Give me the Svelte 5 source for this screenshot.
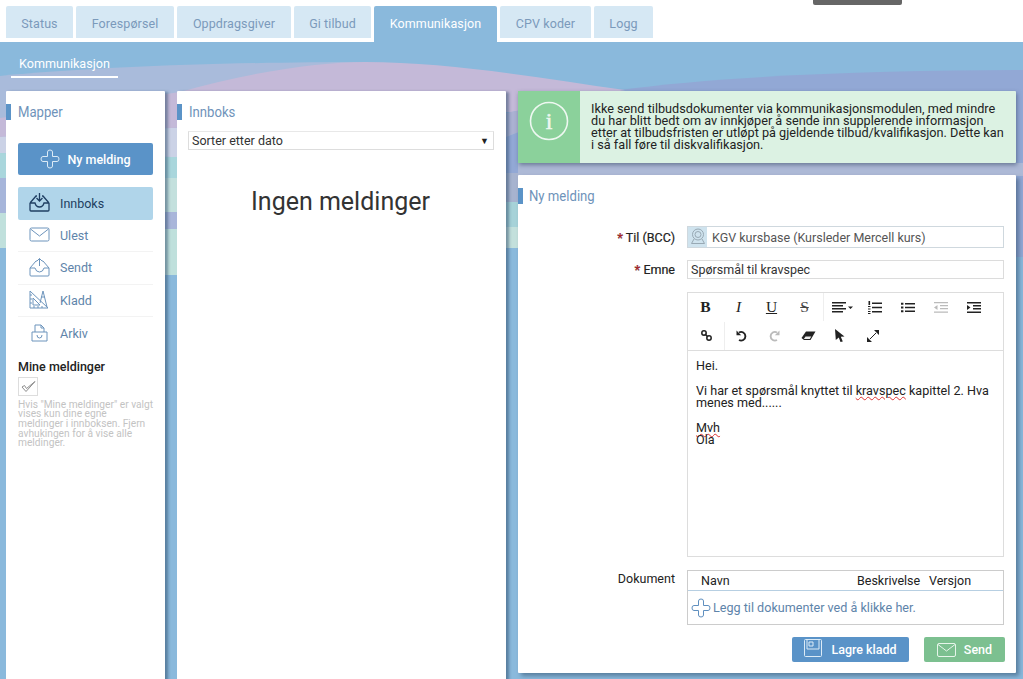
<script>
  const tabs = [
    { label: 'Status', w: 67 },
    { label: 'Forespørsel', w: 98 },
    { label: 'Oppdragsgiver', w: 114 },
    { label: 'Gi tilbud', w: 77 },
    { label: 'Kommunikasjon', w: 123, active: true },
    { label: 'CPV koder', w: 91 },
    { label: 'Logg', w: 59 }
  ];
  const folders = [
    { label: 'Innboks', icon: 'in', active: true },
    { label: 'Ulest', icon: 'mail' },
    { label: 'Sendt', icon: 'out' },
    { label: 'Kladd', icon: 'draft' },
    { label: 'Arkiv', icon: 'arch' }
  ];
  const plus = 'M7.5 7.5 V3 Q7.5 1 10 1 Q12.5 1 12.5 3 V7.5 H17 Q19 7.500 19 10 Q19 12.5 17 12.5 H12.5 V17 Q12.5 19 10 19 Q7.5 19 7.5 17 V12.5 H3 Q1 12.5 1 10 Q1 7.5 3 7.5 Z';
  const tray = 'M1 10 L7 3 H8 M13 3 H14 L20 10 M1 10 V17 Q1 18 2 18 H19 Q20 18 20 17 V10 M1 10 H6 Q7 14 10.5 14 Q14 14 15 10 H20';
</script>

<div class="page">
  <svg class="bg" viewBox="0 0 1023 679" preserveAspectRatio="none" aria-hidden="true">
    <rect width="1023" height="679" fill="#8ab9dc" />
    <path d="M0 76 C100 66 250 62 365 62 L400 160 L0 160 Z" fill="#a9bbdb" />
    <path d="M620 90 C720 76 880 70 1023 70 L1023 257 L506 257 L506 137 Z" fill="#92a8d5" />
    <path d="M0 118 L180 92 C250 72 320 62 365 62 C450 62 540 78 625 90 L512 112 L171 128 L0 137 Z" fill="#c4b9d8" />
    <path d="M506 113 L625 90 L506 137 Z" fill="#abb1d2" />
    <path d="M0 137 L171 128 L340 128 L340 157 L171 157 L0 153 Z" fill="#cbd2e6" />
    <path d="M0 153 L171 157 L340 157 L340 178 L0 178 Z" fill="#a9d6dc" />
    <path d="M0 178 H6 V213 H0 Z" fill="#a6b5da" />
    <rect x="0" y="213" width="6" height="35" fill="#c0e0dc" />
    <rect x="160" y="178" width="20" height="34" fill="#c3e0dd" />
    <rect x="160" y="212" width="20" height="17" fill="#a9b6da" />
    <rect x="160" y="229" width="20" height="46" fill="#bfe0dc" />
    <rect x="506" y="173" width="12" height="29" fill="#a7b3cf" />
    <rect x="506" y="202" width="12" height="25" fill="#a6d2d8" />
    <rect x="506" y="227" width="12" height="21" fill="#c3e0dc" />
    <rect x="506" y="248" width="12" height="12" fill="#8ab9dc" />
    <rect x="518" y="163" width="505" height="13" fill="#adb9d6" />
    <rect x="0" y="0" width="1023" height="42" fill="#fff" />
  </svg>

  <header class="tabs">
    {#each tabs as t}
      <div class="tab" class:active={t.active} style="width:{t.w}px">{t.label}</div>
    {/each}
    <div class="topchip"></div>
  </header>

  <nav class="subnav"><span>Kommunikasjon</span></nav>

  <main class="cols">
    <section class="card left">
      <h2><span>Mapper</span></h2>
      <button class="btn primary new">
        <svg width="20" height="20" viewBox="0 0 20 20" fill="none" stroke="#dcebf6" stroke-width="1"><path d={plus} /></svg>
        Ny melding
      </button>
      <ul class="folders">
        {#each folders as f}
          <li class:active={f.active}>
            <svg class="ficon" width="21" height="20" viewBox="0 0 21 20" fill="none" stroke={f.active ? '#1f3f63' : '#6d94bc'} stroke-width={f.active ? 1.3 : 1}>
              {#if f.icon === 'in'}
                <path d={tray} /><path d="M10.5 0 V8 M7.5 5 L10.5 8 L13.5 5" />
              {:else if f.icon === 'mail'}
                <rect x="1" y="3" width="19" height="13" rx="1.5" /><path d="M1.5 4 L10.5 11 L19.5 4" />
              {:else if f.icon === 'out'}
                <path d={tray} /><path d="M10.5 8 V0.5 M8 3 L10.5 .5 L13 3" />
              {:else if f.icon === 'draft'}
                <path d="M1 1 L19 18 H1 Z M4 8 L11 15 H4 Z M1 5 H3 M1 9 H3 M1 13 H3 M5 18 V16 M9 18 V16 M13 18 V16 M14 1 L11 13 M14 1 L18 17 M12 7 H16" />
              {:else}
                <path d="M6 9 V2 H12 L15 5 V9 M12 2 V5 H15 M3 9 H18 V18 H3 Z M8 12 Q8 15 10.500 15 Q13 15 13 12" />
              {/if}
            </svg>
            <span>{f.label}</span>
          </li>
        {/each}
      </ul>
      <h3>Mine meldinger</h3>
      <div class="check">
        <svg width="15" height="13" viewBox="0 0 15 13" fill="none" stroke="#8d8d8d" stroke-width="1"><path d="M1 7 L5 11.5 L14 1.5 L5.5 8.5 L3.5 5.5 Z" stroke-linejoin="round"/></svg>
      </div>
      <p class="hint">Hvis "Mine meldinger" er valgt<br />vises kun dine egne<br />meldinger i innboksen. Fjern<br />avhukingen for å vise alle<br />meldinger.</p>
    </section>

    <section class="card mid">
      <h2><span>Innboks</span></h2>
      <div class="sort"><span>Sorter etter dato</span><i>▼</i></div>
      <div class="empty">Ingen meldinger</div>
    </section>

    <div class="right">
      <aside class="alert">
        <div class="alert-ic">
          <svg width="40" height="40" viewBox="0 0 40 40" fill="none" stroke="#eef8f1" stroke-width="1.6">
            <circle cx="20" cy="20" r="18.500" />
            <text x="20" y="28" text-anchor="middle" font-family="Liberation Serif, serif" font-size="24" fill="#eef8f1" stroke="#eef8f1" stroke-width=".5">i</text>
          </svg>
        </div>
        <p>Ikke send tilbudsdokumenter via kommunikasjonsmodulen, med mindre du har blitt bedt om av innkjøper å sende inn supplerende informasjon etter at tilbudsfristen er utløpt på gjeldende tilbud/kvalifikasjon. Dette kan i så fall føre til diskvalifikasjon.</p>
      </aside>

      <section class="card form">
        <h2><span>Ny melding</span></h2>
        <div class="row first">
          <div class="lbl"><b>*</b> Til (BCC)</div>
          <div class="input to">
            <span class="avatar">
              <svg width="16" height="18" viewBox="0 0 16 18" fill="none" stroke="#98a9b4" stroke-width="1"><circle cx="8" cy="6.5" r="5.5"/><circle cx="8" cy="6.5" r="3"/><path d="M4 11 L1.5 15.5 H14.5 L12 11"/></svg>
            </span>
            <span>KGV kursbase (Kursleder Mercell kurs)</span>
          </div>
        </div>
        <div class="row second">
          <div class="lbl"><b>*</b> Emne</div>
          <div class="input subject">Spørsmål til kravspec</div>
        </div>
        <div class="row editor-row">
          <div class="lbl"></div>
          <div class="editor">
            <div class="toolbar">
              <div class="tool-line">
                <span class="tb serif"><strong>B</strong></span>
                <span class="tb serif"><em>I</em></span>
                <span class="tb serif u">U</span>
                <span class="tb serif s">S</span>
                <span class="sep push"></span>
                <span class="tb wide">
                  <svg width="22" height="11" viewBox="0 0 22 11" fill="#222"><path d="M0 0h14v1.4H0zM0 3h11v1.4H0zM0 6h14v1.4H0zM0 9h11v1.4H0zM16 4.500h5l-2.500 2.500z"/></svg>
                </span>
                <span class="tb">
                  <svg width="14" height="13" viewBox="0 0 14 13" fill="#222"><path d="M4 1.500h10V3H4zM4 5.700h10v1.500H4zM4 10h10v1.500H4zM.5 0h1.600v4H.5zM0 5h2.500v1H0zM0 7.500h2.500v1H0zM0 10h2.500v1H0zM0 12h2.500v1H0z"/></svg>
                </span>
                <span class="tb">
                  <svg width="14" height="11" viewBox="0 0 14 11" fill="#222"><path d="M4 1h10v1.500H4zM4 4.700h10v1.500H4zM4 8.500h10V10H4zM0 .8h2.400v2H0zM0 4.500h2.400v2H0zM0 8.200h2.400v2H0z"/></svg>
                </span>
                <span class="tb">
                  <svg width="14" height="11" viewBox="0 0 14 11" fill="#bbb"><path d="M0 0h14v1.200H0zM6 3h8v1.200H6zM6 6h8v1.200H6zM0 9.500h14v1.200H0zM3.500 3v5L0 5.500z"/></svg>
                </span>
                <span class="tb">
                  <svg width="14" height="11" viewBox="0 0 14 11" fill="#222"><path d="M0 0h14v1.400H0zM6 3h8v1.400H6zM6 6h8v1.400H6zM0 9.500h14v1.400H0zM0 3v5l3.500-2.500z"/></svg>
                </span>
              </div>
              <div class="tool-line second-line">
                <span class="tb link">
                  <svg width="11" height="11" viewBox="0 0 11 11" fill="none" stroke="#222" stroke-width="1.500"><circle cx="3" cy="3" r="2.200"/><circle cx="8" cy="8" r="2.200"/><path d="M4 4 L7 7"/></svg>
                </span>
                <span class="sep"></span>
                <span class="tb">
                  <svg width="12" height="12" viewBox="0 0 12 12" fill="none" stroke="#222" stroke-width="1.900"><path d="M3 2.500 A4.300 4.300 0 1 1 3 10"/><path d="M.5 .5 L.5 5.200 L5.200 5.200 Z" fill="#222" stroke="none"/></svg>
                </span>
                <span class="tb redo">
                  <svg width="12" height="12" viewBox="0 0 12 12" fill="none" stroke="#bbb" stroke-width="1.900"><path d="M9 2.500 A4.300 4.300 0 1 0 9 10"/><path d="M11.500 .5 L11.500 5.200 L6.800 5.200 Z" fill="#bbb" stroke="none"/></svg>
                </span>
                <span class="tb eraser">
                  <svg width="15" height="10" viewBox="0 0 15 10" fill="#222"><path d="M5 0.500 L14.500 0.500 L9.500 9 L3 9 L0.500 7 Z"/><path d="M4.500 5.500 L2.800 8 L8.800 8 L10.300 5.500 Z" fill="#eee"/></svg>
                </span>
                <span class="tb">
                  <svg width="10" height="13" viewBox="0 0 10 13" fill="#222"><path d="M0 0 L9.500 7.500 L5.800 7.800 L7.800 12.500 L5.500 13 L3.800 8.600 L0.800 11 Z"/></svg>
                </span>
                <span class="tb">
                  <svg width="12" height="12" viewBox="0 0 12 12" fill="#222"><path d="M7 0H12V5Z M0 7V12H5Z"/><path d="M3 9 L9 3" stroke="#222" stroke-width="1" /></svg>
                </span>
              </div>
            </div>
            <div class="body">
              <p>Hei.</p>
              <p>Vi har et spørsmål knyttet til <span class="spell">kravspec</span> kapittel 2. Hva menes med......</p>
              <p><span class="spell">Mvh</span><br />Ola</p>
            </div>
          </div>
        </div>
        <div class="row doc-row">
          <div class="lbl plain">Dokument</div>
          <div class="docs">
            <div class="doc-head"><span class="n">Navn</span><span class="d">Beskrivelse</span><span class="v">Versjon</span></div>
            <div class="doc-add">
              <svg width="20" height="20" viewBox="0 0 20 20" fill="none" stroke="#5f8fbf" stroke-width="1"><path d={plus} /></svg>
              <span>Legg til dokumenter ved å klikke her.</span>
            </div>
          </div>
        </div>
        <div class="actions">
          <button class="btn primary save">
            <svg class="save-ic" width="18" height="18" viewBox="0 0 18 18" fill="none" stroke="#dcebf6" stroke-width="1"><rect x=".5" y=".5" width="17" height="17" rx="1"/><path d="M3 .5 V10 H15 V.5 M5 3 H9 V7 H5 Z"/></svg>
            Lagre kladd
          </button>
          <button class="btn send">
            <svg width="19" height="14" viewBox="0 0 19 14" fill="none" stroke="#e6f5ea" stroke-width="1"><rect x=".5" y=".5" width="18" height="13" rx="1.500"/><path d="M1 1.500 L9.500 8 L18 1.500"/></svg>
            Send
          </button>
        </div>
      </section>
    </div>
  </main>
</div>

<style>
  :global(body) { margin: 0; background: #fff; }
  .page {
    position: relative;
    width: 1023px;
    height: 679px;
    overflow: hidden;
    font-family: Roboto, "Liberation Sans", sans-serif;
    font-size: 12.6px;
    color: #222;
  }
  .bg { position: absolute; left: 0; top: 0; width: 1023px; height: 679px; }
  .tabs {
    position: relative;
    height: 42px;
    box-sizing: border-box;
    padding: 6px 0 0 6px;
    display: flex;
    gap: 3px;
    align-items: flex-start;
  }
  .tab {
    height: 32px;
    line-height: 35px;
    text-align: center;
    background: #d6e8f4;
    color: #7b9abb;
    border-radius: 2px 2px 0 0;
    font-size: 12.5px;
    letter-spacing: .1px;
  }
  .tab.active { height: 36px; background: #8ab9dc; color: #fff; }
  .topchip {
    position: absolute;
    left: 813px; top: 0;
    width: 89px; height: 5px;
    background: #666;
    border-radius: 0 0 2px 2px;
  }
  .subnav {
    position: relative;
    height: 49px;
    box-sizing: border-box;
    padding: 14px 0 0 11px;
    color: #fff;
    font-size: 12.6px;
  }
  .subnav span {
    display: inline-block;
    width: 107px;
    padding-left: 8px;
    box-sizing: border-box;
    height: 21px;
    line-height: 14px;
    border-bottom: 2px solid #fff;
  }
  .cols {
    position: relative;
    display: flex;
    gap: 12px;
    padding-left: 6px;
    align-items: flex-start;
  }
  .card {
    background: #fff;
    box-shadow: 3px 1px 3px rgba(40, 70, 100, .5);
    border-radius: 1px;
  }
  .left, .mid { height: 600px; box-sizing: border-box; }
  .left { width: 159px; padding: 0 12px; position: relative; }
  .mid { width: 329px; padding: 0 12px; position: relative; }
  h2 {
    margin: 0;
    height: 40px;
    line-height: 43px;
    font-weight: 400;
    font-size: 15px;
    color: #6f93ba;
    position: relative;
  }
  h2 span { display: inline-block; transform: scaleX(.875); transform-origin: left center; }
  h2::before {
    content: '';
    position: absolute;
    left: -12px; top: 13px;
    width: 5px; height: 16px;
    background: #5b93c7;
  }
  .btn {
    border: 0;
    border-radius: 2px;
    color: #fff;
    font-family: Roboto, sans-serif;
    font-weight: 500;
    font-size: 12.5px;
    display: flex;
    align-items: center;
    justify-content: center;
  }
  .primary { background: #5a93c8; }
  .new {
    width: 135px;
    height: 32px;
    margin-top: 12px;
    gap: 7px;
    padding: 0;
  }
  .folders { list-style: none; margin: 12px 0 0; padding: 0; }
  .folders li {
    height: 32.5px;
    display: flex;
    align-items: center;
    gap: 10px;
    padding-left: 11px;
    color: #5e84aa;
    font-size: 12.5px;
    box-sizing: border-box;
    border-bottom: 1px solid #f3f3f3;
  }
  .folders li:last-child { border-bottom: 0; }
  .folders li.active {
    background: #b0d5ea;
    border-radius: 2px;
    color: #21405f;
    border-bottom: 0;
  }
  h3 {
    margin: 9px 0 3px;
    font-size: 12.5px;
    font-weight: 500;
    color: #222;
    line-height: 15px;
  }
  .check {
    width: 18px; height: 17px;
    border: 1px solid #ddd;
    display: flex;
    align-items: center;
    justify-content: center;
  }
  .hint {
    margin: 4px -4px 0 0;
    font-size: 10.2px;
    line-height: 9.7px;
    color: #c3c3c3;
    white-space: nowrap;
  }
  .sort {
    height: 19px;
    box-sizing: border-box;
    border: 1px solid #ddd;
    border-top-color: #e8e8e8;
    margin-left: -1px;
    padding: 0 4px 0 3px;
    display: flex;
    align-items: center;
    justify-content: space-between;
    font-size: 12.5px;
    color: #333;
  }
  .sort i { font-style: normal; font-size: 9px; color: #222; }
  .empty {
    text-align: center;
    font-size: 25px;
    color: #333;
    margin-top: 37px;
    line-height: 30px;
    padding-right: 2px;
  }
  .right { width: 498px; }
  .alert {
    height: 72px;
    display: flex;
    background: #dcf2e3;
    box-shadow: 1px 2px 4px rgba(40, 60, 90, .5);
    border-radius: 1px;
    margin-bottom: 12px;
  }
  .alert-ic {
    width: 62px;
    background: #8bd19b;
    display: flex;
    align-items: flex-start;
    justify-content: center;
    padding-top: 10px;
    box-sizing: border-box;
    flex: none;
  }
  .alert p {
    margin: 0;
    padding: 12px 12px 0 11px;
    font-size: 12.7px;
    line-height: 12px;
    color: #222;
  }
  .form { height: 498px; box-shadow: 3px 3px 4px rgba(40, 70, 100, .5); padding: 0 11px; box-sizing: border-box; }
  .form h2::before { left: -11px; }
  .row { display: flex; align-items: center; }
  .lbl {
    width: 158px;
    flex: none;
    text-align: right;
    padding-right: 12px;
    box-sizing: border-box;
    color: #222;
    font-size: 12.5px;
    -webkit-text-stroke: .2px #222;
  }
  .lbl b { color: #c0272d; font-weight: 700; }
  .row.first { margin-top: 11px; }
  .row.second { margin-top: 12px; }
  .input {
    width: 317px;
    box-sizing: border-box;
    border: 1px solid #dcdcdc;
    font-size: 12.5px;
    color: #333;
  }
  .to {
    height: 22px;
    display: flex;
    align-items: center;
    gap: 5px;
    color: #555;
    border-color: #cfd8de;
  }
  .avatar {
    width: 19px;
    height: 20px;
    background: #cfe3ee;
    display: flex;
    align-items: center;
    justify-content: center;
  }
  .subject {
    height: 19px;
    line-height: 17px;
    padding-left: 3px;
  }
  .editor-row { align-items: flex-start; margin-top: 13px; }
  .editor {
    width: 317px;
    height: 265px;
    box-sizing: border-box;
    border: 1px solid #ddd;
    display: flex;
    flex-direction: column;
  }
  .toolbar { height: 58px; flex: none; border-bottom: 1px solid #ddd; box-sizing: border-box; }
  .tool-line { height: 28.5px; display: flex; align-items: center; padding-left: 1px; }
  .tb {
    width: 33px;
    height: 28px;
    display: flex;
    align-items: center;
    justify-content: center;
    flex: none;
  }
  .tb.wide { width: 36px; margin-left: 1px; margin-right: -3px; }
  .serif { font-family: "Liberation Serif", serif; font-size: 15.5px; color: #222; }
  .u { text-decoration: underline; }
  .s { text-decoration: line-through; color: #444; }
  .sep { width: 1px; height: 28px; background: #eee; flex: none; }
  .sep.push { margin-left: 2px; }
  .second-line .link { margin-left: 1px; margin-right: 1px; }
  .second-line .redo { margin-left: -1px; margin-right: 2px; }
  .second-line .eraser { margin-right: -2px; }
  .body { padding: 9px 8px; font-size: 12.6px; line-height: 12px; color: #222; }
  .body p { margin: 0 0 13px; }
  .spell { text-decoration: underline wavy #d33; text-decoration-thickness: 1px; text-underline-offset: 1px; }
  .doc-row { align-items: flex-start; margin-top: 13px; }
  .plain { padding-top: 1px; -webkit-text-stroke: 0; }
  .docs {
    width: 317px;
    height: 55px;
    box-sizing: border-box;
    border: 1px solid #ccc;
  }
  .doc-head {
    height: 19px;
    border-bottom: 1px solid #b7cfe2;
    display: flex;
    align-items: center;
    position: relative;
    font-size: 12.5px;
    color: #222;
  }
  .doc-head span { position: absolute; }
  .n { left: 13px; }
  .d { left: 169px; }
  .v { left: 241px; }
  .doc-add {
    display: flex;
    align-items: center;
    gap: 2px;
    height: 33px;
    padding-left: 3px;
    color: #5e84aa;
    font-size: 12.6px;
  }
  .actions {
    display: flex;
    justify-content: flex-end;
    gap: 15px;
    margin-top: 12px;
  }
  .save { width: 117px; height: 25px; gap: 9px; padding: 0; }
  .save-ic { margin-top: -4px; }
  .send { width: 81px; height: 25px; gap: 8px; padding: 0; background: #7cc090; }
</style>
